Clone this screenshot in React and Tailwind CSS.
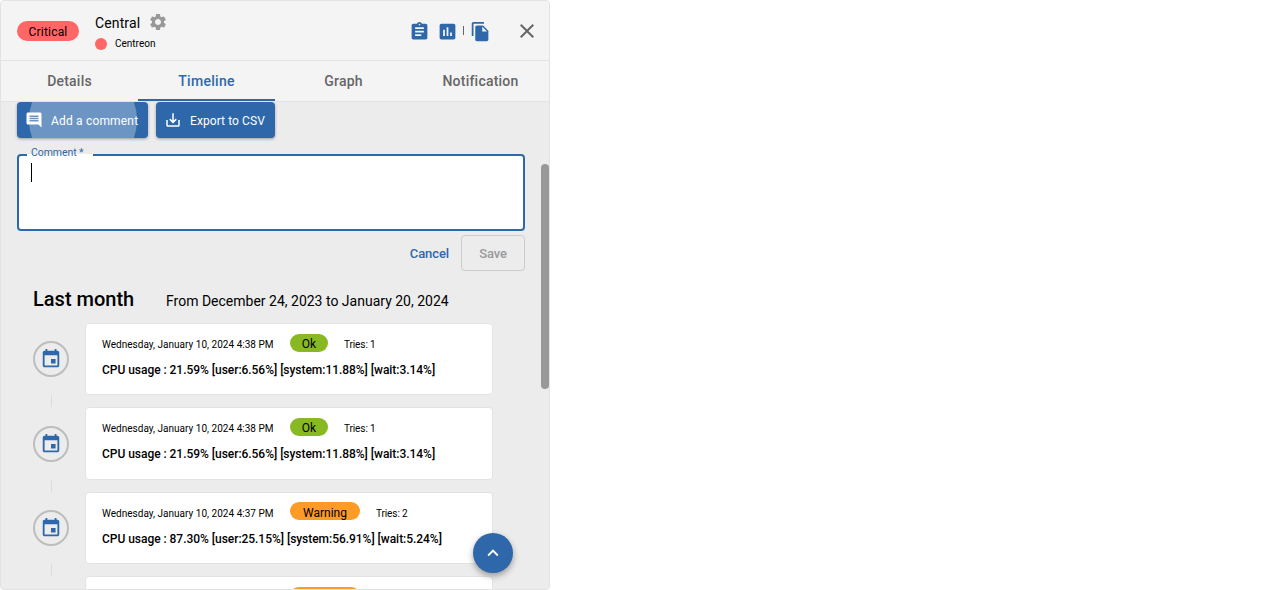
import React from 'react';

function Icon({ d, className }) {
  return (
    <svg viewBox="0 0 24 24" fill="currentColor" className={`shrink-0 ${className}`} aria-hidden="true">
      <path d={d} />
    </svg>
  );
}

const icons = {
  settings:
    'M19.14 12.94c.04-.3.06-.61.06-.94 0-.32-.02-.64-.07-.94l2.03-1.58c.18-.14.23-.41.12-.61l-1.92-3.32c-.12-.22-.37-.29-.59-.22l-2.39.96c-.5-.38-1.03-.7-1.62-.94l-.36-2.54c-.04-.24-.24-.41-.48-.41h-3.84c-.24 0-.43.17-.47.41l-.36 2.54c-.59.24-1.13.57-1.62.94l-2.39-.96c-.22-.08-.47 0-.59.22L2.74 8.87c-.12.21-.08.47.12.61l2.03 1.58c-.05.3-.09.63-.09.94s.02.64.07.94l-2.03 1.58c-.18.14-.23.41-.12.61l1.92 3.32c.12.22.37.29.59.22l2.39-.96c.5.38 1.03.7 1.62.94l.36 2.54c.05.24.24.41.48.41h3.84c.24 0 .44-.17.47-.41l.36-2.54c.59-.24 1.13-.56 1.62-.94l2.39.96c.22.08.47 0 .59-.22l1.92-3.32c.12-.22.07-.47-.12-.61l-2.01-1.58zM12 15.6c-1.98 0-3.6-1.62-3.6-3.6s1.62-3.6 3.6-3.6 3.6 1.62 3.6 3.6-1.62 3.6-3.6 3.6z',
  assignment:
    'M19 3h-4.18C14.4 1.84 13.3 1 12 1c-1.3 0-2.4.84-2.82 2H5c-1.1 0-2 .9-2 2v14c0 1.1.9 2 2 2h14c1.1 0 2-.9 2-2V5c0-1.1-.9-2-2-2zm-7 0c.55 0 1 .45 1 1s-.45 1-1 1-1-.45-1-1 .45-1 1-1zm2 14H7v-2h7v2zm3-4H7v-2h10v2zm0-4H7V7h10v2z',
  assessment:
    'M19 3H5c-1.1 0-2 .9-2 2v14c0 1.1.9 2 2 2h14c1.1 0 2-.9 2-2V5c0-1.1-.9-2-2-2zM9 17H7v-7h2v7zm4 0h-2V7h2v10zm4 0h-2v-4h2v4z',
  fileCopy:
    'M16 1H4c-1.1 0-2 .9-2 2v14h2V3h12V1zm-1 4l6 6v10c0 1.1-.9 2-2 2H7.99C6.89 23 6 22.1 6 21l.01-14c0-1.1.89-2 1.99-2h7zm-1 7h5.5L14 6.5V12z',
  close:
    'M19 6.41L17.59 5 12 10.59 6.41 5 5 6.41 10.59 12 5 17.59 6.41 19 12 13.41 17.59 19 19 17.59 13.41 12z',
  comment:
    'M20 2H4c-1.1 0-2 .9-2 2v12c0 1.1.9 2 2 2h14l4 4V4c0-1.1-.9-2-2-2zm-2 12H6v-2h12v2zm0-3H6V9h12v2zm0-3H6V6h12v2z',
  saveAlt:
    'M19 12v7H5v-7H3v7c0 1.1.9 2 2 2h14c1.1 0 2-.9 2-2v-7h-2zm-6 .67l2.59-2.58L17 11.5l-5 5-5-5 1.41-1.41L11 12.67V3h2z',
  event:
    'M17 12h-5v5h5v-5zM16 1v2H8V1H6v2H5c-1.11 0-1.99.9-1.99 2L3 19c0 1.1.89 2 2 2h14c1.1 0 2-.9 2-2V5c0-1.1-.9-2-2-2h-1V1h-2zm3 18H5V8h14v11z',
  arrowUp: 'M7.41 15.41L12 10.83l4.59 4.58L18 14l-6-6-6 6z',
};

const events = [
  { date: 'Wednesday, January 10, 2024 4:38 PM', status: 'Ok', tries: 1, text: 'CPU usage : 21.59% [user:6.56%] [system:11.88%] [wait:3.14%]' },
  { date: 'Wednesday, January 10, 2024 4:38 PM', status: 'Ok', tries: 1, text: 'CPU usage : 21.59% [user:6.56%] [system:11.88%] [wait:3.14%]' },
  { date: 'Wednesday, January 10, 2024 4:37 PM', status: 'Warning', tries: 2, text: 'CPU usage : 87.30% [user:25.15%] [system:56.91%] [wait:5.24%]' },
  { status: 'Warning' },
];

const chipColors = {
  Ok: 'w-[38px] bg-[#88b922]',
  Warning: 'w-[70px] bg-[#fd9b27]',
};

function Header() {
  return (
    <header className="flex h-[60px] shrink-0 items-center border-b border-[#e3e3e3] bg-[#f4f4f4] pl-4 pr-[10px]">
      <span className="flex h-5 w-[62px] items-center justify-center rounded-full bg-[#ff6666] pt-0.5 text-xs leading-5 tracking-[0.2px]">Critical</span>
      <div className="ml-4 flex flex-col pt-[5px]">
        <div className="flex h-[22px] items-center">
          <h1 className="pt-px text-sm leading-[22px] tracking-[0.13px]">Central</h1>
          <Icon d={icons.settings} className="ml-2 size-5 text-[#999999]" />
        </div>
        <div className="flex h-[22px] items-center gap-2">
          <span className="size-3 rounded-full bg-[#ff6666]" />
          <span className="text-[10px] leading-5">Centreon</span>
        </div>
      </div>
      <div className="ml-auto flex items-center text-[#2e68aa]">
        <Icon d={icons.assignment} className="mt-px size-[21px]" />
        <Icon d={icons.assessment} className="ml-[7px] mt-px size-[21px]" />
        <span className="ml-[5.5px] h-[9px] w-px bg-[#666666]" />
        <Icon d={icons.fileCopy} className="ml-[6px] mt-px size-[21px]" />
        <Icon d={icons.close} className="ml-[23.7px] size-6 text-[#666666]" />
      </div>
    </header>
  );
}

function Tabs() {
  return (
    <nav className="grid h-[41px] shrink-0 grid-cols-4 border-b border-[#e3e3e3] bg-[#f4f4f4] text-sm font-medium tracking-[0.22px] text-[#666666]">
      <span className="flex items-center justify-center">Details</span>
      <span className="flex items-center justify-center border-b-2 border-[#2e68aa] pt-0.5 tracking-[0.3px] text-[#2e68aa]">Timeline</span>
      <span className="flex items-center justify-center">Graph</span>
      <span className="flex items-center justify-center">Notification</span>
    </nav>
  );
}

function Toolbar() {
  return (
    <div className="flex gap-2 text-xs text-white">
      <button className="relative flex h-9 w-[131px] items-center overflow-hidden rounded bg-[#2e68aa] pl-2 shadow-[0_1px_3px_rgba(0,0,0,0.35)]">
        <span className="absolute -top-9 left-3 size-[108px] rounded-full bg-white/30" />
        <Icon d={icons.comment} className="relative size-[18px]" />
        <span className="relative ml-2 whitespace-nowrap pt-0.5 tracking-[0.18px]">Add a comment</span>
      </button>
      <button className="flex h-9 w-[119px] items-center rounded bg-[#2e68aa] pl-2 shadow-[0_1px_3px_rgba(0,0,0,0.35)]">
        <Icon d={icons.saveAlt} className="size-[18px]" />
        <span className="ml-2 whitespace-nowrap pt-0.5 tracking-[0.08px]">Export to CSV</span>
      </button>
    </div>
  );
}

function CommentForm() {
  return (
    <div className="mt-4 w-[508px]">
      <div className="relative h-[77px] rounded border-2 border-[#2e68aa] bg-white pl-3 pt-[7px]">
        <span className="absolute -top-0.5 left-2 h-0.5 w-[66px] bg-white" />
        <label className="absolute -top-[9px] left-3 text-[10.5px] leading-3 tracking-[-0.08px] text-[#2e68aa]">Comment *</label>
        <div className="h-[19px] w-px bg-black" />
      </div>
      <div className="mt-1 flex justify-end gap-3 text-[13px] font-medium tracking-[-0.1px]">
        <button className="h-9 pt-0.5 text-[#2e68aa]">Cancel</button>
        <button className="h-9 w-16 rounded border border-[#cccccc] pt-0.5 text-[#999999]">Save</button>
      </div>
    </div>
  );
}

function Event({ event }) {
  return (
    <li className="flex h-[84.4px] gap-4">
      <div className="flex w-9 flex-col items-center pt-[18.2px]">
        <span className="flex size-9 shrink-0 items-center justify-center rounded-full border-2 border-[#bdbdbd] text-[#2e68aa]">
          <Icon d={icons.event} className="size-[22px]" />
        </span>
        <span className="ml-px mt-[18px] h-3 w-px bg-[#dcdcdc]" />
      </div>
      <article className="h-[72.4px] w-[408px] rounded border border-[#e3e3e3] bg-white px-4 pt-[9.6px]">
        <div className="flex h-[18px] items-center gap-4 text-[10px]">
          <time className="w-[172px] whitespace-nowrap pt-[3.8px] tracking-[0.02px]">{event.date}</time>
          <span className={`flex h-[18px] items-center justify-center rounded-full pt-[2.8px] text-xs leading-[18px] ${chipColors[event.status]}`}>
            {event.text && event.status}
          </span>
          {event.tries && <span className="pt-[3.8px] tracking-[-0.1px]">Tries: {event.tries}</span>}
        </div>
        {event.text && <p className="mt-[9.4px] whitespace-nowrap text-xs font-medium leading-[18px] tracking-[-0.035px]">{event.text}</p>}
      </article>
    </li>
  );
}

export default function App() {
  return (
    <div className="h-[590px] bg-white font-['Roboto',sans-serif] text-black">
      <main className="relative flex h-[590px] w-[550px] flex-col overflow-hidden rounded border border-[#e3e3e3] bg-[#ececec]">
        <Header />
        <Tabs />
        <section className="flex min-h-0 flex-1 justify-between overflow-hidden">
          <div className="pl-4">
            <Toolbar />
            <CommentForm />
            <div className="ml-4 mt-4 flex h-9 items-baseline">
              <h2 className="w-[133px] text-xl font-medium leading-6">Last month</h2>
              <span className="text-sm">From December 24, 2023 to January 20, 2024</span>
            </div>
            <ul className="ml-4">
              {events.map((event, i) => (
                <Event key={i} event={event} />
              ))}
            </ul>
          </div>
          <div className="mt-[62px] h-[225px] w-2 rounded-full bg-[#999999]" />
        </section>
        <button className="absolute bottom-4 right-9 flex size-10 items-center justify-center rounded-full bg-[#2e68aa] text-white shadow-[0_3px_6px_rgba(0,0,0,0.35)]">
          <Icon d={icons.arrowUp} className="size-[22px]" />
        </button>
      </main>
    </div>
  );
}
